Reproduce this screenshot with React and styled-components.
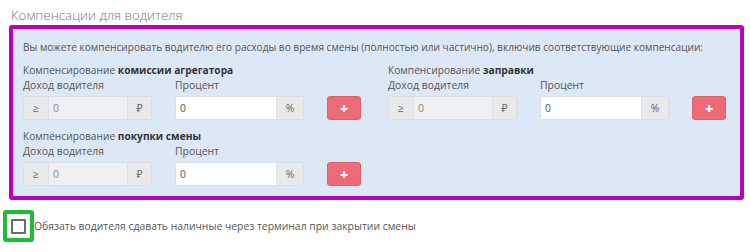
import React from "react";
import styled, { createGlobalStyle } from "styled-components";

const Global = createGlobalStyle`
  html, body { margin: 0; padding: 0; background: #fff; }
  body { font-family: "Open Sans", "Noto Sans", sans-serif; color: #555; }
`;

const Page = styled.div`
  width: 750px;
  height: 252px;
  overflow: hidden;
  box-sizing: border-box;
  padding-top: 5px;
`;

const Title = styled.div`
  font-size: 13.3px;
  line-height: 20px;
  font-weight: 300;
  color: #777;
  padding-left: 11px;
`;

const Panel = styled.div`
  margin-left: 9px;
  width: 735px;
  box-sizing: border-box;
  border: 4px solid #bb00bb;
  border-radius: 3px;
  background: #dde8f7;
  padding: 10px 10px 10px 10px;
`;

const Intro = styled.div`
  font-size: 10.1px;
  line-height: 17px;
  color: #555;
  margin-bottom: 7px;
  white-space: nowrap;
`;

const Grid = styled.div`
  display: grid;
  grid-template-columns: 365px 350px;
  row-gap: 9px;
`;

const Block = styled.div`
  display: flex;
  flex-direction: column;
`;

const Heading = styled.div`
  font-size: 10.2px;
  line-height: 15px;
  color: #555;
  b { font-weight: 700; color: #333; }
`;

const Fields = styled.div`
  display: grid;
  grid-template-columns: 129px 129px 34px;
  column-gap: 23px;
`;

const Field = styled.div`
  display: flex;
  flex-direction: column;
`;

const Label = styled.div`
  font-size: 10.4px;
  line-height: 15px;
  color: #555;
  margin-bottom: 3px;
`;

const Group = styled.div`
  display: flex;
  height: 24px;
  box-sizing: border-box;
  border: 1px solid #dcdfe3;
  border-radius: 3px;
  overflow: hidden;
  background: #fff;
`;

const Addon = styled.div`
  width: ${(p) => p.$w}px;
  flex: none;
  display: flex;
  align-items: center;
  justify-content: center;
  background: #e9eaec;
  color: #666;
  font-size: 10.4px;
  ${(p) => (p.$side === "left" ? "border-right: 1px solid #dcdfe3;" : "border-left: 1px solid #dcdfe3;")}
`;

const Value = styled.div`
  flex: 1;
  display: flex;
  align-items: center;
  padding-left: 4px;
  font-size: 10.4px;
  color: ${(p) => (p.$disabled ? "#888" : "#555")};
  background: ${(p) => (p.$disabled ? "#eef0f3" : "#fff")};
`;

const AddButton = styled.div`
  align-self: end;
  width: 34px;
  height: 24px;
  box-sizing: border-box;
  border-radius: 3px;
  background: #ec6b76;
  border: 1px solid #e0606b;
  color: #fff;
  font-weight: 800;
  font-size: 14px;
  display: flex;
  align-items: center;
  justify-content: center;
`;

const CheckRow = styled.label`
  display: flex;
  align-items: center;
  margin-top: 10px;
  margin-left: 3px;
  font-size: 10.4px;
  color: #555;
`;

const Highlight = styled.span`
  display: inline-flex;
  flex: none;
  box-sizing: border-box;
  border: 4px solid #22bb33;
  border-radius: 3px;
  width: 31px;
  height: 32px;
  align-items: center;
  justify-content: center;
`;

const Box = styled.span`
  width: 15px;
  height: 15px;
  box-sizing: border-box;
  border: 2px solid #6b6b6b;
  background: #fff;
  border-radius: 1px;
`;

const Comp = ({ name }) => (
  <Block>
    <Heading>
      Компенсирование <b>{name}</b>
    </Heading>
    <Fields>
      <Field>
        <Label>Доход водителя</Label>
        <Group>
          <Addon $w={24} $side="left">≥</Addon>
          <Value $disabled>0</Value>
          <Addon $w={23} $side="right">₽</Addon>
        </Group>
      </Field>
      <Field>
        <Label>Процент</Label>
        <Group>
          <Value>0</Value>
          <Addon $w={26} $side="right">%</Addon>
        </Group>
      </Field>
      <AddButton>+</AddButton>
    </Fields>
  </Block>
);

export default function App() {
  return (
    <Page>
      <Global />
      <Title>Компенсации для водителя</Title>
      <Panel>
        <Intro>
          Вы можете компенсировать водителю его расходы во время смены (полностью или частично), включив соответствующие компенсации:
        </Intro>
        <Grid>
          <Comp name="комиссии агрегатора" />
          <Comp name="заправки" />
          <Comp name="покупки смены" />
        </Grid>
      </Panel>
      <CheckRow>
        <Highlight>
          <Box />
        </Highlight>
        Обязать водителя сдавать наличные через терминал при закрытии смены
      </CheckRow>
    </Page>
  );
}
